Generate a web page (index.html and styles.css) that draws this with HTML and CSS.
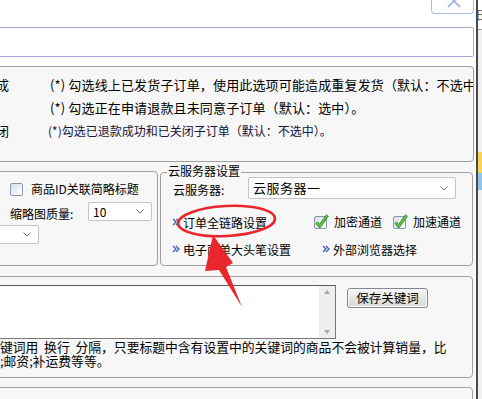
FILE: index.html
```html
<!DOCTYPE html>
<html lang="zh-CN">
<head>
<meta charset="utf-8">
<title>设置</title>
<link rel="stylesheet" href="styles.css">
</head>
<body>
<div class="window">
  <div class="main">
    <div class="inner">
      <div class="head">
        <div class="top">
          <div class="close">
            <svg width="43" height="14" viewBox="0 0 43 14"><path d="M17 -4 L29 8 M29 -4 L17 8" stroke="#a6bbd9" stroke-width="2" fill="none"/></svg>
          </div>
        </div>
        <div class="search"></div>
      </div>
      <div class="lower">
        <div class="g1">
          <div class="lab">发货完成</div>
          <div class="txt">(*) 勾选线上已发货子订单，使用此选项可能造成重复发货（默认：不选中</div>
          <div class="lab"></div>
          <div class="txt">(*) 勾选正在申请退款且未同意子订单（默认：选中）。</div>
          <div class="lab">已关闭</div>
          <div class="txt small">(*)勾选已退款成功和已关闭子订单（默认：不选中）。</div>
        </div>

        <div class="row2">
          <div class="lbox">
            <div class="lrow r1">
              <span class="cb"></span>
              <span class="cblab">商品ID关联简略标题</span>
            </div>
            <div class="lrow r2">
              <span class="qlab">缩略图质量:</span>
              <div class="sel s10"><span>10</span><svg width="8" height="5" viewBox="0 0 8 5"><path d="M0.5 0.5 L4 4 L7.5 0.5" stroke="#707070" fill="none"/></svg></div>
            </div>
            <div class="lrow r3">
              <div class="sel s3"><span></span><svg width="8" height="5" viewBox="0 0 8 5"><path d="M0.5 0.5 L4 4 L7.5 0.5" stroke="#707070" fill="none"/></svg></div>
            </div>
          </div>

          <div class="rbox">
            <span class="legend">云服务器设置</span>
            <div class="rrow ra">
              <span class="slab">云服务器:</span>
              <div class="sel scloud"><span>云服务器一</span><svg width="8" height="5" viewBox="0 0 8 5"><path d="M0.5 0.5 L4 4 L7.5 0.5" stroke="#707070" fill="none"/></svg></div>
            </div>
            <div class="rrow rb">
              <a class="link l1"><svg class="dbl" width="8" height="8" viewBox="0 0 8 8"><path d="M1 1 L4 4 L1 7 M4 1 L7 4 L4 7" stroke="#3b63b0" stroke-width="1.3" fill="none"/></svg>订单全链路设置</a>
              <svg class="cbx" width="13" height="13" viewBox="0 0 13 13"><defs><linearGradient id="gb" x1="0" y1="0" x2="1" y2="1"><stop offset="0" stop-color="#d9e0ea"/><stop offset="1" stop-color="#ffffff"/></linearGradient></defs><rect x="0.5" y="0.5" width="12" height="12" rx="1.5" fill="url(#gb)" stroke="#8797b3"/><path d="M2.6 6.4 L5.6 10.4 L13.6 -0.8" stroke="#2f8f2a" stroke-width="3.2" fill="none" stroke-linejoin="round"/><path d="M2.6 6.4 L5.6 10.4 L13.6 -0.8" stroke="#5fc04a" stroke-width="1.8" fill="none" stroke-linejoin="round"/></svg>
              <span class="cklab">加密通道</span>
              <svg class="cbx c2" width="13" height="13" viewBox="0 0 13 13"><rect x="0.5" y="0.5" width="12" height="12" rx="1.5" fill="url(#gb)" stroke="#8797b3"/><path d="M2.6 6.4 L5.6 10.4 L13.6 -0.8" stroke="#2f8f2a" stroke-width="3.2" fill="none" stroke-linejoin="round"/><path d="M2.6 6.4 L5.6 10.4 L13.6 -0.8" stroke="#5fc04a" stroke-width="1.8" fill="none" stroke-linejoin="round"/></svg>
              <span class="cklab">加速通道</span>
            </div>
            <div class="rrow rc">
              <a class="link l2"><svg class="dbl" width="8" height="8" viewBox="0 0 8 8"><path d="M1 1 L4 4 L1 7 M4 1 L7 4 L4 7" stroke="#3b63b0" stroke-width="1.3" fill="none"/></svg>电子面单大头笔设置</a>
              <a class="link"><svg class="dbl" width="8" height="8" viewBox="0 0 8 8"><path d="M1 1 L4 4 L1 7 M4 1 L7 4 L4 7" stroke="#3b63b0" stroke-width="1.3" fill="none"/></svg>外部浏览器选择</a>
            </div>
          </div>
        </div>

        <div class="g3">
          <div class="kwrow">
            <div class="ta">
              <div class="tabody"></div>
              <div class="sb">
                <svg width="16" height="10" viewBox="0 0 16 10"><polygon points="5,8 8,4 11,8" fill="#a6a6a6"/></svg>
                <svg width="16" height="10" viewBox="0 0 16 10"><polygon points="5,2 8,6 11,2" fill="#a6a6a6"/></svg>
              </div>
            </div>
            <button class="btn">保存关键词</button>
          </div>
          <div class="note">
            <div class="nl">键词用 &nbsp;换行 &nbsp;分隔，只要标题中含有设置中的关键词的商品不会被计算销量，比</div>
            <div class="nl">;邮资;补运费等等。</div>
          </div>
        </div>

        <div class="g4"></div>
      </div>
    </div>
  </div>
  <div class="side">
    <div class="sfrag">阳</div>
    <div class="sline"></div>
    <div class="syellow"></div>
    <div class="sblue"></div>
  </div>
</div>

<svg class="annot" width="482" height="399" viewBox="0 0 482 399">
  <ellipse cx="226.5" cy="221" rx="48.5" ry="15" transform="rotate(-3 226.5 221)" fill="none" stroke="#e8262b" stroke-width="2.6"/>
  <polygon points="213,235 233,263 226,267 242,307 219,270 205,271" fill="#e8262b"/>
</svg>
</body>
</html>
```

FILE: styles.css
```css
* { box-sizing: border-box; }

body {
  margin: 0;
  width: 482px;
  height: 399px;
  overflow: hidden;
  font-family: "Noto Sans CJK SC", "Noto Sans", sans-serif;
  color: #000;
  background: #f7f7f7;
  position: relative;
}

.window {
  display: flex;
  height: 399px;
}

.main {
  width: 476px;
  height: 399px;
  overflow: hidden;
  background: #fff;
}

.inner {
  margin-left: -120px;
  width: 596px;
}

.head {
  height: 66px;
  background: #fff;
}

.top {
  height: 27px;
  display: flex;
  justify-content: flex-end;
  padding-right: 2px;
}

.close {
  width: 43px;
  height: 14px;
  border: 1px solid #a9c1df;
  border-top: none;
  border-radius: 0 0 4px 4px;
  overflow: hidden;
}

.close svg {
  display: block;
  margin: -1px 0 0 -1px;
}

.search {
  height: 30px;
  margin-right: 2px;
  border: 1px solid #a3aad6;
  border-radius: 0 2px 2px 0;
  background: #fff;
}

.lower {
  background: #f7f7f7;
  height: 333px;
}

/* upper group */
.g1 {
  height: 96px;
  margin-right: 2px;
  border: 1px solid #a0a0a0;
  border-radius: 4px;
  overflow: hidden;
  padding-top: 6px;
  display: grid;
  grid-template-columns: 128px 1fr;
  grid-template-rows: 23px 23px 26px;
  column-gap: 41px;
  align-content: start;
}

.lab {
  font-size: 13px;
  line-height: 23px;
  text-align: right;
  white-space: nowrap;
  overflow: hidden;
}

.txt {
  font-size: 13px;
  line-height: 23px;
  letter-spacing: 0.15px;
  white-space: nowrap;
  overflow: hidden;
}

.txt.small {
  font-size: 12px;
  line-height: 24px;
  letter-spacing: 0;
  margin-left: -2px;
  color: #14143a;
}

/* second row */
.row2 {
  display: flex;
  gap: 2px;
  margin-top: 9px;
  margin-right: 3px;
  height: 95px;
}

.lbox {
  width: 278px;
  height: 95px;
  border: 1px solid #a0a0a0;
  border-radius: 4px;
  padding-top: 7px;
  font-size: 12px;
}

.lrow {
  display: flex;
  align-items: center;
}

.r1 {
  height: 20px;
  padding-left: 129px;
}

.cb {
  width: 13px;
  height: 13px;
  border: 1px solid #8797b3;
  border-radius: 2px;
  background: linear-gradient(135deg, #d9e0ea, #ffffff);
}

.cblab {
  margin-left: 8px;
  line-height: 20px;
}

.r2 {
  height: 19px;
  margin-top: 3px;
  padding-left: 129px;
}

.qlab {
  width: 78px;
  line-height: 19px;
  padding-top: 4px;
}

.sel {
  display: flex;
  align-items: center;
  justify-content: space-between;
  background: #fff;
  border: 1px solid #c4c4c4;
  border-radius: 2px;
  padding: 0 7px 0 4px;
}

.sel span {
  line-height: 18px;
  white-space: nowrap;
}

.s10 {
  width: 64px;
  height: 19px;
}

.r3 {
  height: 19px;
  margin-top: 4px;
  padding-left: 58px;
}

.s3 {
  width: 100px;
  height: 19px;
}

.rbox {
  position: relative;
  width: 313px;
  height: 94px;
  margin-top: 1px;
  border: 1px solid #a0a0a0;
  border-radius: 4px;
  padding: 4px 0 0 12px;
  font-size: 12px;
}

.legend {
  position: absolute;
  top: -9px;
  left: 6px;
  padding: 0 1px;
  line-height: 14px;
  background: #f7f7f7;
}

.rrow {
  display: flex;
  align-items: center;
}

.ra {
  height: 22px;
}

.slab {
  width: 75px;
  line-height: 22px;
  padding-top: 4px;
}

.scloud {
  width: 208px;
  height: 22px;
  padding-left: 4px;
}

.scloud span {
  font-size: 13px;
  letter-spacing: 0.5px;
}

.rb {
  height: 24px;
  margin-top: 11px;
  margin-left: -1px;
}

.rc {
  height: 24px;
  margin-top: 3px;
  margin-left: -1px;
}

.link {
  display: flex;
  align-items: center;
  white-space: nowrap;
  color: #000;
}

.dbl {
  margin-right: 3px;
}

.l1 {
  width: 142px;
}

.l2 {
  width: 150px;
}

.cbx {
  overflow: visible;
  flex: none;
}

.cbx.c2 {
  margin-left: 11px;
}

.cklab {
  margin-left: 7px;
  line-height: 24px;
}

/* keyword group */
.g3 {
  height: 102px;
  margin-top: 10px;
  margin-right: 3px;
  border: 1px solid #a0a0a0;
  border-radius: 4px;
  padding-top: 8px;
  overflow: hidden;
}

.kwrow {
  display: flex;
  align-items: flex-start;
}

.ta {
  display: flex;
  width: 446px;
  height: 54px;
  margin-left: 9px;
  border: 1px solid #7a7a7a;
  border-top-color: #5a5a5a;
  background: #fff;
}

.tabody {
  flex: 1;
}

.sb {
  width: 16px;
  background: #eeeeee;
  display: flex;
  flex-direction: column;
  justify-content: space-between;
}

.sb svg {
  display: block;
}

.btn {
  width: 81px;
  height: 20px;
  margin: 3px 0 0 11px;
  padding: 0;
  border: 1px solid #7f8796;
  border-radius: 3px;
  background: linear-gradient(#f7f7f7, #e4e4e4 55%, #dadada);
  box-shadow: inset 0 0 0 1px #fbfbfb;
  font-family: "Noto Sans CJK SC", sans-serif;
  font-size: 12.5px;
  line-height: 18px;
  color: #000;
}

.note {
  margin-top: 1px;
  padding-left: 119px;
  font-size: 12.8px;
  white-space: nowrap;
}

.nl {
  height: 14px;
  line-height: 14px;
}

.g4 {
  height: 60px;
  margin-top: 9px;
  margin-right: 3px;
  border: 1px solid #a0a0a0;
  border-radius: 4px;
}

/* right edge strip */
.side {
  width: 6px;
  height: 399px;
  border-left: 2px solid #4a4a4a;
  background: #f0f0f0;
  overflow: hidden;
  display: flex;
  flex-direction: column;
}

.sfrag {
  height: 29px;
  padding-top: 8px;
  font-size: 12px;
  line-height: 14px;
  color: #555;
  text-indent: -6px;
  background: #fff;
  overflow: hidden;
}

.sline {
  height: 1px;
  background: #a0a0a0;
  margin-bottom: 122px;
}

.syellow {
  height: 21px;
  background: #f7d35a;
}

.sblue {
  height: 17px;
  background: #8ec4ee;
}

.annot {
  position: absolute;
  left: 0;
  top: 0;
  pointer-events: none;
}
```
